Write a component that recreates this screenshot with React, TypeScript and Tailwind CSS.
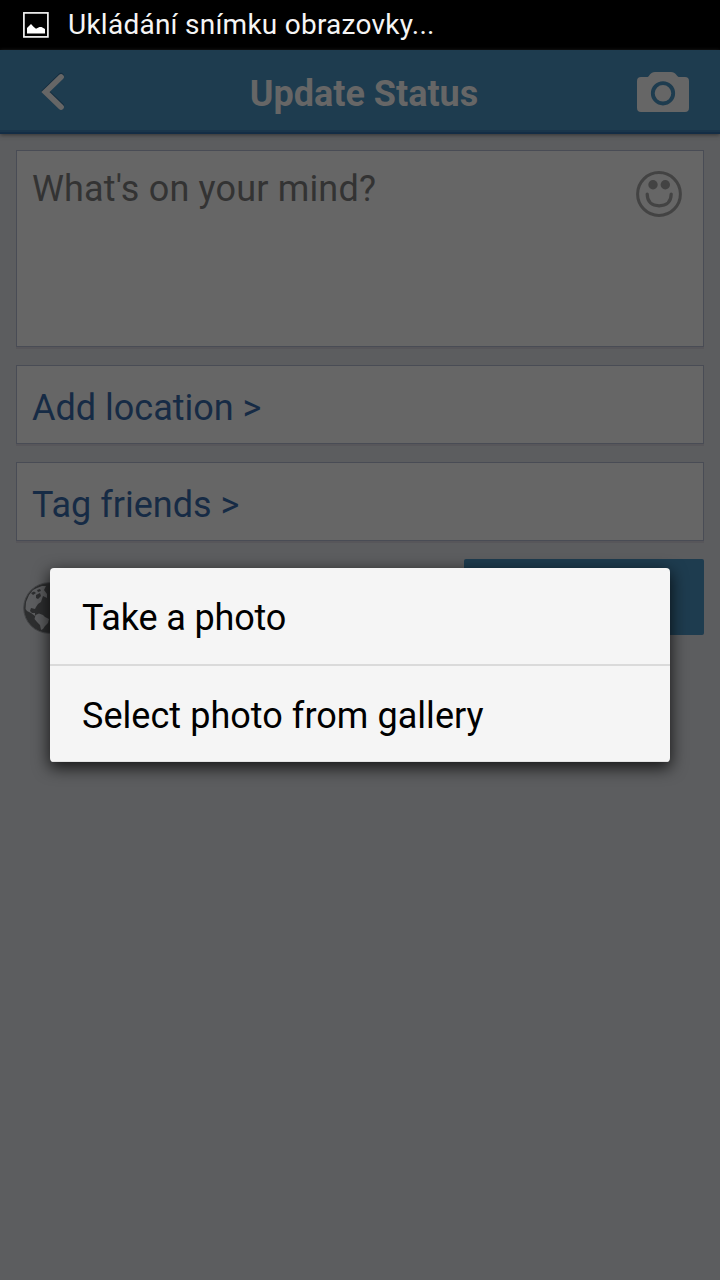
import React from "react";

function PictureIcon() {
  return (
    <svg className="h-[26px] w-[26px]" viewBox="0 0 26 26" fill="none">
      <rect x="0.900" y="0.900" width="24" height="24" stroke="#f4f4f4" strokeWidth="1.700" />
      <path d="M4 21.500V16L8 12L10.800 15L13 16.800L16.500 15L18.500 15L22 17V21.500Z" fill="#fff" />
    </svg>
  );
}

function BackIcon() {
  return (
    <svg className="h-[40px] w-[26px]" viewBox="0 0 26 40" fill="none" strokeLinecap="round">
      <path d="M20 4L4.500 19L20 34" stroke="#142d3f" strokeWidth="6" />
      <path d="M20 5L4.500 20L20 35" stroke="#666" strokeWidth="5.800" />
    </svg>
  );
}

function CameraIcon() {
  return (
    <svg className="h-[40px] w-[52px]" viewBox="0 0 52 40">
      <path
        d="M4 5H10.500C12.500 4.500 13 0 18 0H34C39 0 39.500 4.500 42 5H48Q52 5 52 9V36Q52 40 48 40H4Q0 40 0 36V9Q0 5 4 5Z"
        fill="#666"
      />
      <circle cx="26" cy="21.300" r="10.200" fill="none" stroke="#1e3c4f" strokeWidth="3.800" />
    </svg>
  );
}

function SmileIcon() {
  return (
    <svg className="h-[46px] w-[46px]" viewBox="0 0 46 46" fill="none">
      <circle cx="23" cy="23" r="21.400" stroke="#434343" strokeWidth="3" />
      <circle cx="17" cy="13.700" r="4.700" fill="#434343" />
      <circle cx="29.300" cy="13.700" r="4.700" fill="#434343" />
      <path d="M11.200 23C11.200 31 16 34.800 23.200 34.800S35.200 31 35.200 23" stroke="#434343" strokeWidth="3.200" strokeLinecap="round" />
    </svg>
  );
}

function GlobeIcon() {
  return (
    <svg className="h-[52px] w-[52px]" viewBox="0 0 52 52">
      <circle cx="26" cy="26" r="25.300" fill="#2d2e2f" stroke="#454648" strokeWidth="1" />
      <path
        d="M2.500 27L3 20L6 13L10 8L14 6L19 4L23 4L21 8L24 12L24 16L20 14L19 17L18 20L15 22L13 25L12 27L8 26L7 29L9 31L12 31L12 34L8 31L4 29ZM12.500 33L16 31.500L20 33L22 35L26 37L25 41L22 44L20 47L18 48L17 43L14 40L11.500 37Z"
        fill="#5c5d5f"
      />
      <path d="M8 11L11 9.500L13 11L10 13ZM14 8L17 7L18 9L15 10ZM13 13L17 11L18 14L15 17L13 16Z" fill="#2d2e2f" />
    </svg>
  );
}

function LinkRow({ children }: { children: React.ReactNode }) {
  return (
    <div className="flex h-[79px] items-center border border-[#494c55] bg-[#666] pt-[7px] pl-[15px] shadow-[0_2px_0_#57565a]">
      <span className="text-[36px] leading-[42px] whitespace-nowrap text-[#162b45]">{children}</span>
    </div>
  );
}

export default function App() {
  return (
    <div className="relative flex h-[1280px] w-[720px] flex-col overflow-hidden bg-[#5c5d5f] font-[Roboto,sans-serif]">
      <div className="flex h-[50px] shrink-0 items-center bg-black pb-px pl-[23px]">
        <PictureIcon />
        <span className="ml-[19px] pt-px text-[28px] leading-[34px] tracking-[0.25px] whitespace-nowrap text-[#f5f5f5]">
          Ukládání snímku obrazovky...
        </span>
      </div>
      <header className="flex h-[84px] shrink-0 items-center justify-between border-b-2 border-[#142d45] bg-[#1e3c4f] pr-[31px] pl-[41px] shadow-[0_1px_4px_#333,inset_0_-2px_0_#1a354a]">
        <div className="w-[71px] pt-[2px]">
          <BackIcon />
        </div>
        <h1 className="pt-[6px] text-[36px] leading-[42px] font-bold whitespace-nowrap text-[#666]">Update Status</h1>
        <div className="flex w-[73px] justify-end pt-[2px]">
          <CameraIcon />
        </div>
      </header>
      <main className="flex flex-col gap-[18px] px-4 pt-4">
        <div className="flex h-[197px] items-start justify-between border border-[#494c55] bg-[#666] pt-[17px] pr-[21px] pl-[15px] shadow-[0_2px_0_#57565a]">
          <span className="text-[36px] leading-[42px] tracking-[0.17px] whitespace-nowrap text-[#333]">What's on your mind?</span>
          <div className="pt-[3px]">
            <SmileIcon />
          </div>
        </div>
        <LinkRow>Add location &gt;</LinkRow>
        <LinkRow>Tag friends &gt;</LinkRow>
        <div className="flex items-start justify-between">
          <div className="pt-[23px] pl-[7px]">
            <GlobeIcon />
          </div>
          <div className="h-[76px] w-[240px] rounded-[2px] bg-[#1e3c4f]" />
        </div>
      </main>
      <div className="absolute top-[568px] left-[50px] flex h-[194px] w-[620px] flex-col overflow-hidden rounded-[4px] bg-[#f5f5f5] text-[36px] leading-[42px] text-black shadow-[0_5px_16px_1px_rgba(0,0,0,0.75)]">
        <div className="flex h-[98px] items-center border-b-2 border-[#dadada] pt-[3px] pl-[32px] tracking-[-0.15px] whitespace-nowrap">Take a photo</div>
        <div className="flex h-[96px] items-center border-b border-[#e3e3e3] pt-[4px] pl-[32px] tracking-[0.04px] whitespace-nowrap">
          Select photo from gallery
        </div>
      </div>
    </div>
  );
}
